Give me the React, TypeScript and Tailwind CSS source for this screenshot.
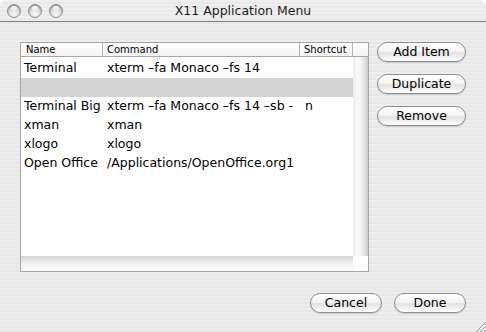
import React from "react";

const font = { fontFamily: '"DejaVu Sans", "Liberation Sans", sans-serif' };

const rows: [string, string, string][] = [
  ["Terminal", "xterm –fa Monaco –fs 14", ""],
  ["", "", ""],
  ["Terminal Big", "xterm –fa Monaco –fs 14 –sb -", "n"],
  ["xman", "xman", ""],
  ["xlogo", "xlogo", ""],
  ["Open Office", "/Applications/OpenOffice.org1", ""],
];

function Light() {
  return (
    <div className="relative h-[14px] w-[14px] rounded-full border border-[#8d8d8d] bg-[radial-gradient(circle_at_50%_75%,#fafafa_0%,#d6d6d6_55%,#a9a9a9_100%)] shadow-[inset_0_1px_1px_rgba(0,0,0,0.25)]">
      <div className="absolute left-[3px] top-[1px] h-[5px] w-[6px] rounded-full bg-[linear-gradient(180deg,#ffffff,rgba(255,255,255,0.2))]" />
    </div>
  );
}

function AquaButton({ label, w }: { label: string; w: string }) {
  return (
    <div
      className={`${w} flex h-[20px] items-center justify-center rounded-full border border-[#8e8e8e] bg-[linear-gradient(180deg,#ffffff_0%,#f4f4f4_45%,#e2e2e2_55%,#f2f2f2_80%,#ffffff_100%)] text-[12.5px] leading-none text-black shadow-[0_1px_1px_rgba(0,0,0,0.15)]`}
    >
      {label}
    </div>
  );
}

export default function App() {
  return (
    <div className="h-[332px] w-[486px] bg-white" style={font}>
      <div className="relative flex h-[332px] w-[486px] flex-col overflow-hidden rounded-t-[7px] bg-[repeating-linear-gradient(180deg,#ededed_0px,#ededed_2px,#e8e8e8_2px,#e8e8e8_4px)]">
        {/* Title bar */}
        <div className="relative flex h-[22px] shrink-0 items-center border-b border-[#7c7c7c] bg-[repeating-linear-gradient(180deg,#efefef_0px,#efefef_2px,#e9e9e9_2px,#e9e9e9_4px)]">
          <div className="flex items-center gap-[7px] pl-[7px] pt-[1px]">
            <Light />
            <Light />
            <Light />
          </div>
          <div className="absolute inset-0 flex items-center justify-center pt-[1px] text-[12.5px] text-[#222]">
            X11 Application Menu
          </div>
        </div>

        {/* Body */}
        <div className="flex pl-[20px] pt-[20px]">
          {/* Table */}
          <div className="flex h-[230px] w-[349px] flex-col border border-[#a5a5a5] bg-white">
            {/* Header */}
            <div className="flex h-[14px] shrink-0 border-b border-[#a8a8a8] bg-[linear-gradient(180deg,#ffffff,#f3f3f3)] text-[10px] leading-[13px] text-black">
              <div className="w-[82px] border-r border-[#b5b5b5] pl-[5px]">Name</div>
              <div className="w-[197px] border-r border-[#b5b5b5] pl-[4px]">Command</div>
              <div className="w-[53px] border-r border-[#b5b5b5] pl-[4px]">Shortcut</div>
              <div className="flex-1" />
            </div>
            {/* Rows + vscroll */}
            <div className="flex h-[199px] shrink-0">
              <div className="w-[332px] pt-[2px] text-[12.5px] text-black">
                {rows.map((r, i) => (
                  <div
                    key={i}
                    className={`flex h-[19px] items-center whitespace-nowrap ${i === 1 ? "bg-[#d4d4d4]" : ""}`}
                  >
                    <div className="w-[82px] overflow-hidden pl-[3px]">{r[0]}</div>
                    <div className="w-[197px] overflow-hidden pl-[4px]">{r[1]}</div>
                    <div className="w-[53px] overflow-hidden pl-[5px]">{r[2]}</div>
                  </div>
                ))}
              </div>
              <div className="w-[15px] bg-[linear-gradient(90deg,#ececec_0%,#f9f9f9_30%,#f4f4f4_55%,#dcdcdc_85%,#cbcbcb_100%)]" />
            </div>
            {/* Horizontal scroll */}
            <div className="flex h-[15px] shrink-0">
              <div className="w-[332px] bg-[linear-gradient(180deg,#d2d2d2_0%,#e6e6e6_30%,#f4f4f4_60%,#fbfbfb_100%)]" />
              <div className="flex-1 bg-white" />
            </div>
          </div>

          {/* Side buttons */}
          <div className="ml-[8px] flex flex-col gap-[12px]">
            <AquaButton label="Add Item" w="w-[89px]" />
            <AquaButton label="Duplicate" w="w-[89px]" />
            <AquaButton label="Remove" w="w-[89px]" />
          </div>
        </div>

        {/* Bottom buttons */}
        <div className="mt-[21px] flex justify-end gap-[12px] pr-[20px]">
          <AquaButton label="Cancel" w="w-[72px]" />
          <AquaButton label="Done" w="w-[72px]" />
        </div>

        {/* Resize grip */}
        <svg className="absolute bottom-0 right-0" width="12" height="12" viewBox="0 0 12 12">
          <line x1="2" y1="12" x2="12" y2="2" stroke="#9a9a9a" strokeWidth="1" />
          <line x1="6" y1="12" x2="12" y2="6" stroke="#9a9a9a" strokeWidth="1" />
          <line x1="10" y1="12" x2="12" y2="10" stroke="#9a9a9a" strokeWidth="1" />
        </svg>
      </div>
    </div>
  );
}
